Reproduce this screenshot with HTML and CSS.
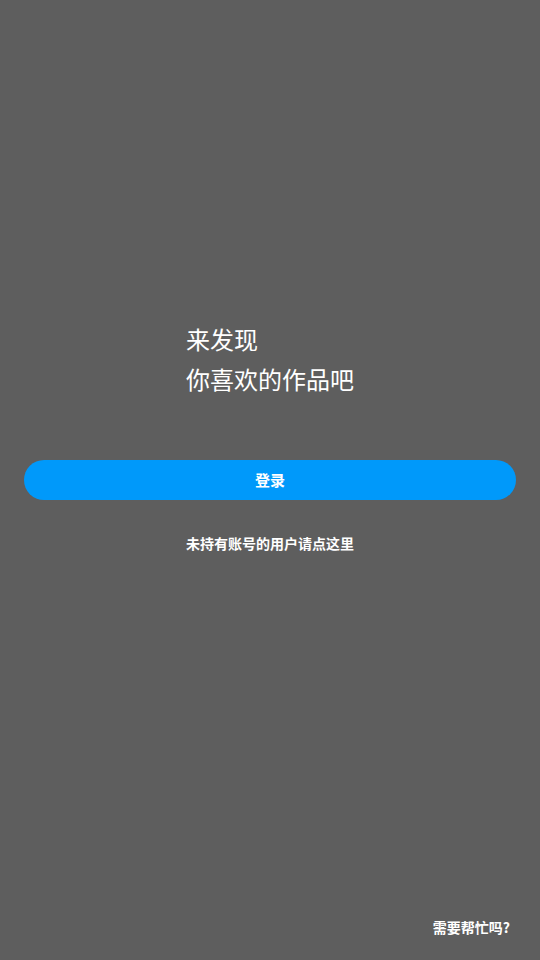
FILE: index.html
```html
<!DOCTYPE html>
<html lang="zh-CN">
<head>
<meta charset="utf-8">
<link rel="stylesheet" href="styles.css">
</head>
<body>
<main class="page">
  <div class="intro">
    <p class="intro-text">来发现<br>你喜欢的作品吧</p>
  </div>
  <button class="login-btn">登录</button>
  <a class="signup-link">未持有账号的用户请点这里</a>
  <div class="help-row">
    <a class="help-link">需要帮忙吗?</a>
  </div>
</main>
</body>
</html>
```
FILE: styles.css
```css
html, body {
  margin: 0;
  padding: 0;
  background: #5e5e5e;
}
body {
  font-family: "Noto Sans CJK SC", "Noto Sans", sans-serif;
  color: #ffffff;
}
.page {
  width: 540px;
  height: 960px;
  box-sizing: border-box;
  display: flex;
  flex-direction: column;
  align-items: center;
  padding: 319px 24px 23px;
}
.intro {
  display: flex;
  justify-content: center;
  width: 100%;
}
.intro-text {
  margin: 0;
  font-size: 24px;
  line-height: 40px;
  text-align: left;
}
.login-btn {
  margin-top: 61px;
  width: 100%;
  height: 40px;
  border: none;
  border-radius: 20px;
  background: #0099fa;
  color: #ffffff;
  font-family: inherit;
  font-size: 15px;
  font-weight: 700;
  padding: 0 0 2px;
}
.signup-link {
  margin-top: 33px;
  font-size: 14px;
  font-weight: 700;
  line-height: 20px;
}
.help-row {
  margin-top: auto;
  width: 100%;
  display: flex;
  justify-content: flex-end;
  padding-right: 6px;
  box-sizing: border-box;
}
.help-link {
  font-size: 14px;
  font-weight: 700;
  line-height: 20px;
}
```
